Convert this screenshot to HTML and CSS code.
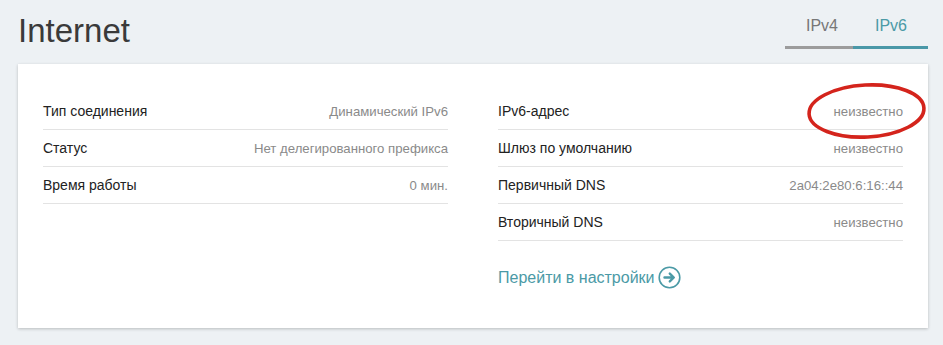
FILE: index.html
```html
<!DOCTYPE html>
<html lang="ru">
<head>
<meta charset="utf-8">
<title>Internet</title>
<link rel="stylesheet" href="styles.css">
</head>
<body>
<div class="page">
  <header class="header">
    <h1 class="title">Internet</h1>
    <nav class="tabs">
      <span class="tab tab-v4">IPv4</span>
      <span class="tab tab-v6 active">IPv6</span>
    </nav>
  </header>
  <section class="card">
    <div class="col">
      <div class="row"><span class="label">Тип соединения</span><span class="value">Динамический IPv6</span></div>
      <div class="row"><span class="label">Статус</span><span class="value">Нет делегированного префикса</span></div>
      <div class="row"><span class="label">Время работы</span><span class="value">0 мин.</span></div>
    </div>
    <div class="col">
      <div class="row"><span class="label">IPv6-адрес</span><span class="value">неизвестно</span></div>
      <div class="row"><span class="label">Шлюз по умолчанию</span><span class="value">неизвестно</span></div>
      <div class="row"><span class="label">Первичный DNS</span><span class="value">2a04:2e80:6:16::44</span></div>
      <div class="row"><span class="label">Вторичный DNS</span><span class="value">неизвестно</span></div>
      <a class="link" href="#">Перейти в настройки
        <svg class="link-icon" width="23" height="23" viewBox="0 0 23 23">
          <circle cx="11.5" cy="11.5" r="10.3" fill="none" stroke="#4b9aa6" stroke-width="1.6"/>
          <path d="M6.5 11.5 H15.5 M11.8 7.6 L15.8 11.5 L11.8 15.4" fill="none" stroke="#4b9aa6" stroke-width="2.4" stroke-linecap="round" stroke-linejoin="round"/>
        </svg>
      </a>
    </div>
    <svg class="mark" width="125" height="62" viewBox="0 0 125 62">
      <ellipse cx="62.5" cy="30" rx="57.5" ry="26" transform="rotate(-3 62.5 30)" fill="none" stroke="#d4241c" stroke-width="3.6"/>
    </svg>
  </section>
</div>
</body>
</html>
```

FILE: styles.css
```css
html, body {
  margin: 0;
  padding: 0;
  background: #edf1f4;
}
body {
  font-family: "Liberation Sans", Arial, sans-serif;
  width: 943px;
  height: 345px;
  overflow: hidden;
}
.page {
  padding: 0 15px 0 18px;
}
.header {
  display: flex;
  justify-content: space-between;
  align-items: flex-start;
  height: 64px;
}
.title {
  margin: 0;
  padding-top: 12px;
  font-size: 33px;
  font-weight: normal;
  color: #3a3a3a;
  line-height: 38px;
}
.tabs {
  display: flex;
  margin-top: 17px;
}
.tab {
  font-size: 16px;
  line-height: 18px;
  padding-bottom: 11px;
  border-bottom: 3px solid #9c9c9c;
  color: #777;
}
.tab-v4 {
  padding-left: 21px;
  padding-right: 15px;
}
.tab-v6 {
  padding-left: 22px;
  padding-right: 21px;
}
.tab.active {
  color: #4b9aa6;
  border-bottom-color: #4a98a8;
}
.card {
  position: relative;
  background: #fff;
  height: 264px;
  box-sizing: border-box;
  padding: 29px 25px 0 25px;
  display: grid;
  grid-template-columns: 405px 405px;
  column-gap: 50px;
  align-items: start;
  box-shadow: 0 1px 3px rgba(0, 0, 0, 0.22);
}
.row {
  display: flex;
  justify-content: space-between;
  align-items: center;
  height: 36px;
  border-bottom: 1px solid #e3e3e3;
}
.label {
  font-size: 14px;
  color: #222;
}
.value {
  font-size: 13.2px;
  color: #8a8a8a;
}
.link {
  display: inline-flex;
  align-items: center;
  gap: 3px;
  margin-top: 25px;
  font-size: 16px;
  color: #4b9aa6;
  text-decoration: none;
}
.link-icon {
  display: block;
}
.mark {
  position: absolute;
  left: 786px;
  top: 17px;
}
```
